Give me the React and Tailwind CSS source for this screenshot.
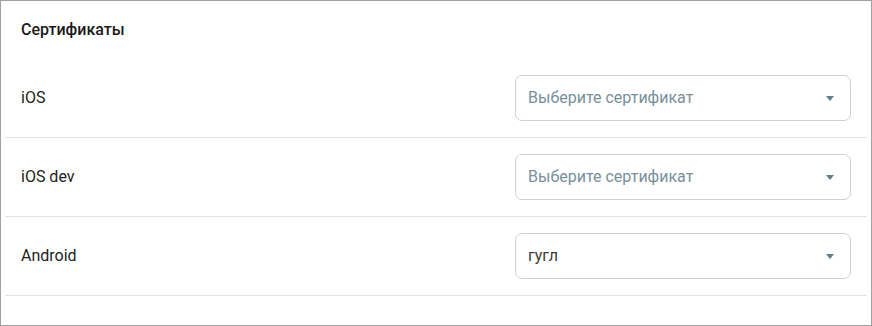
import React from "react";

const rows = [
  { label: "iOS", value: null },
  { label: "iOS dev", value: null },
  { label: "Android", value: "гугл" },
];

const CertSelect = ({ value }) => (
  <div className="relative flex h-[46px] w-[336px] items-center rounded-[7px] border border-[#cfcfcf] bg-white pl-3 pr-4">
    <span
      className={
        value ? "text-[16px] text-[#3a3a3a]" : "text-[16px] text-[#78909c]"
      }
    >
      {value || "Выберите сертификат"}
    </span>
    {/* dropdown caret */}
    <svg
      className="ml-auto"
      width="8"
      height="5"
      viewBox="0 0 8 5"
      aria-hidden="true"
    >
      <path d="M0 0h8L4 5z" fill="#607d8b" />
    </svg>
  </div>
);

export default function App() {
  return (
    <div
      className="h-[326px] w-[872px] border border-[#a0a0a0] bg-white"
      style={{ fontFamily: "Roboto, 'Liberation Sans', sans-serif" }}
    >
      <div className="px-[4px]">
        {/* Heading */}
        <div className="flex h-[58px] items-center px-4">
          <h2 className="text-[16px] font-medium text-[#1a1a1a]">
            Сертификаты
          </h2>
        </div>

        {/* Certificate rows */}
        {rows.map((row) => (
          <div
            key={row.label}
            className="flex h-[79px] items-center justify-between border-b border-[#e3e3e3] pl-4 pr-[16px]"
          >
            <span className="text-[16px] text-[#222222]">{row.label}</span>
            <CertSelect value={row.value} />
          </div>
        ))}
      </div>
    </div>
  );
}
